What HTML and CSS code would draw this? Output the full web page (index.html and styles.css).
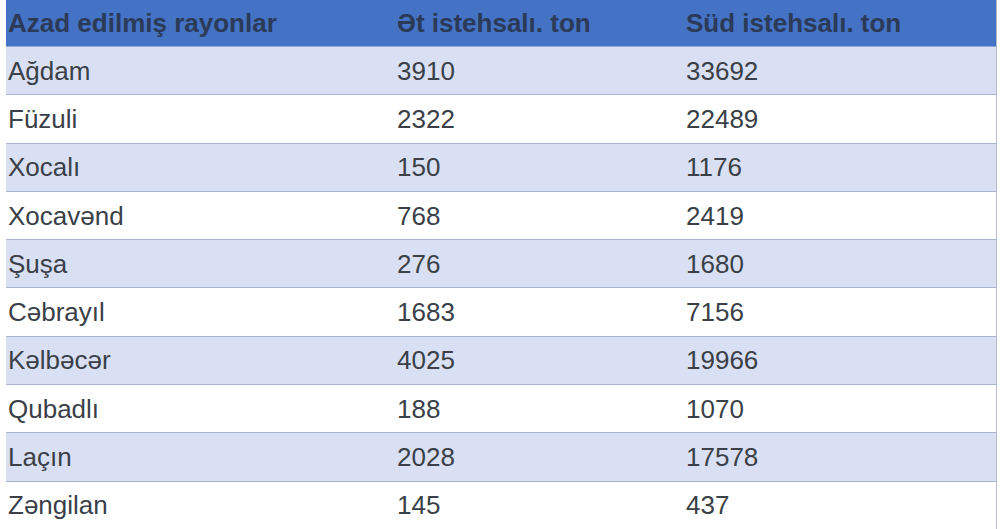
FILE: index.html
```html
<!DOCTYPE html>
<html lang="az">
<head>
<meta charset="utf-8">
<link rel="stylesheet" href="styles.css">
</head>
<body>
<table class="data">
  <colgroup><col class="c1"><col class="c2"><col class="c3"></colgroup>
  <thead>
    <tr><th>Azad edilmiş rayonlar</th><th>Ət istehsalı. ton</th><th>Süd istehsalı. ton</th></tr>
  </thead>
  <tbody>
    <tr class="alt"><td>Ağdam</td><td>3910</td><td>33692</td></tr>
    <tr><td>Füzuli</td><td>2322</td><td>22489</td></tr>
    <tr class="alt"><td>Xocalı</td><td>150</td><td>1176</td></tr>
    <tr><td>Xocavənd</td><td>768</td><td>2419</td></tr>
    <tr class="alt"><td>Şuşa</td><td>276</td><td>1680</td></tr>
    <tr><td>Cəbrayıl</td><td>1683</td><td>7156</td></tr>
    <tr class="alt"><td>Kəlbəcər</td><td>4025</td><td>19966</td></tr>
    <tr><td>Qubadlı</td><td>188</td><td>1070</td></tr>
    <tr class="alt"><td>Laçın</td><td>2028</td><td>17578</td></tr>
    <tr><td>Zəngilan</td><td>145</td><td>437</td></tr>
  </tbody>
</table>
</body>
</html>
```
FILE: styles.css
```css
html, body { margin: 0; padding: 0; background: #ffffff; }
body { padding-left: 6px; }
.data {
  border-collapse: collapse;
  width: 991px;
  font-family: "Liberation Sans", Arial, sans-serif;
  font-size: 26px;
  color: #3a3f48;
  border-right: 1px solid #b8bcc4;
  table-layout: fixed;
}
.c1 { width: 389px; }
.c2 { width: 289px; }
.data th {
  background: #4472c4;
  color: #2b3a57;
  font-weight: bold;
  text-align: left;
  height: 46px;
  padding: 0 0 0 2px;
  border-bottom: 1px solid #8fa6d6;
  vertical-align: middle;
  line-height: 30px;
}
.data td {
  height: 47.3px;
  padding: 0 0 0 2px;
  border-bottom: 1px solid #a9b5cf;
  vertical-align: middle;
  line-height: 30px;
}
.data tr.alt td { background: #d9e0f3; }
```
